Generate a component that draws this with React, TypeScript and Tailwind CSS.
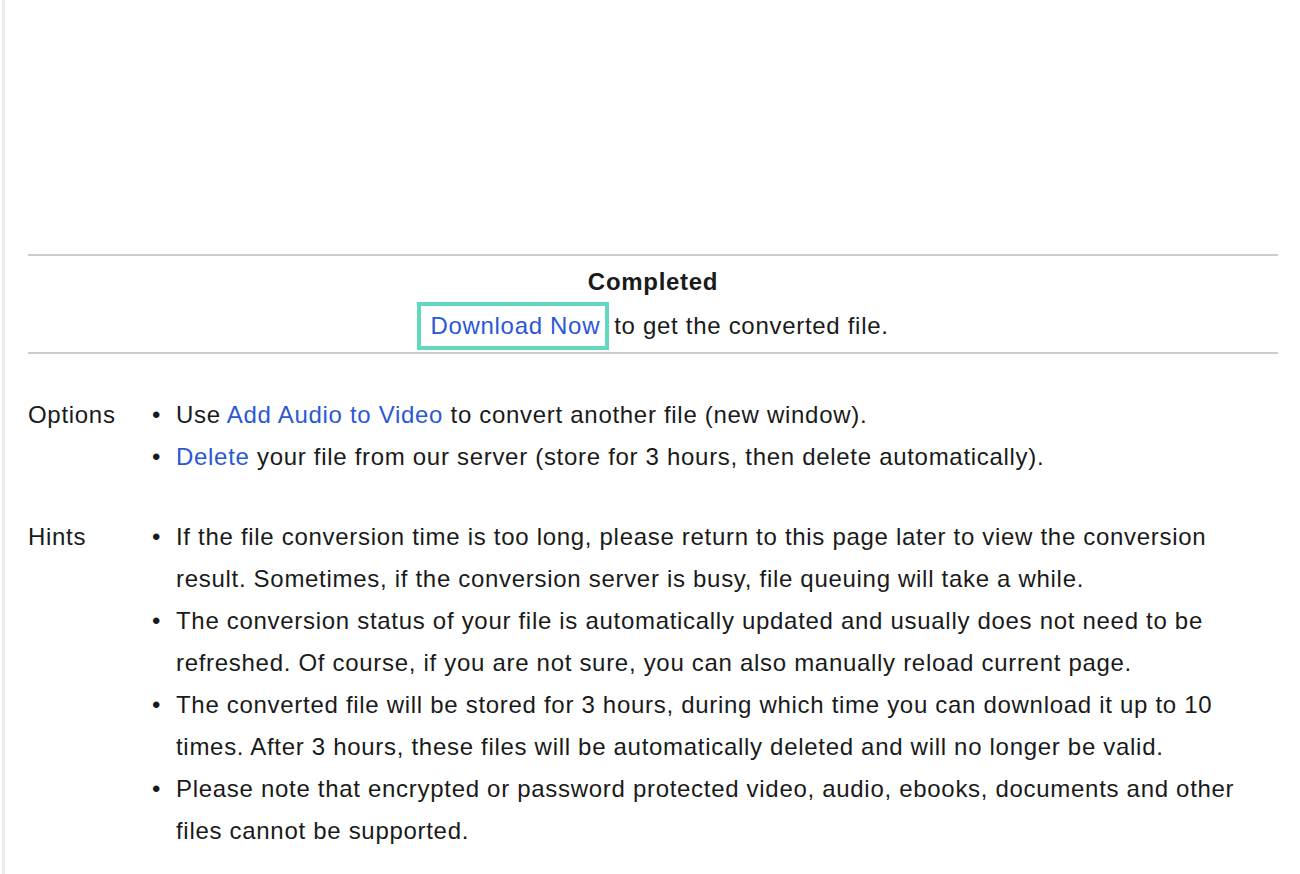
const font = { fontFamily: '"Liberation Sans", Arial, sans-serif' }

function Link({ children }: { children: React.ReactNode }) {
  return <a href="#" className="text-[#2a58d6] no-underline">{children}</a>
}

function Bullets({ items }: { items: React.ReactNode[] }) {
  return (
    <ul className="flex flex-col">
      {items.map((item, i) => (
        <li key={i} className="flex">
          <span className="w-[24px] shrink-0">•</span>
          <span className="flex-1">{item}</span>
        </li>
      ))}
    </ul>
  )
}

export default function App() {
  const options = [
    <>Use <Link>Add Audio to Video</Link> to convert another file (new window).</>,
    <><Link>Delete</Link> your file from our server (store for 3 hours, then delete automatically).</>,
  ]

  const hints = [
    "If the file conversion time is too long, please return to this page later to view the conversion result. Sometimes, if the conversion server is busy, file queuing will take a while.",
    "The conversion status of your file is automatically updated and usually does not need to be refreshed. Of course, if you are not sure, you can also manually reload current page.",
    "The converted file will be stored for 3 hours, during which time you can download it up to 10 times. After 3 hours, these files will be automatically deleted and will no longer be valid.",
    "Please note that encrypted or password protected video, audio, ebooks, documents and other files cannot be supported.",
  ]

  return (
    <div
      className="min-h-[874px] bg-white border-l-[3px] border-[#ebebeb] ml-[2px] text-[24px] leading-[42px] tracking-[0.7px] text-[#1a1a1a]"
      style={font}
    >
      <div className="pl-[23px] pr-[22px] pt-[254px]">
        <div className="border-t-2 border-b-2 border-[#cccccc] pt-[6px] pb-[2px] text-center">
          <div className="font-bold leading-[40px]">Completed</div>
          <div className="flex justify-center items-center">
            <span className="border-4 border-[#62d8c1] pl-[9px] pr-[5px] leading-[40px] mr-[5px]">
              <Link>Download Now</Link>
            </span>
            <span>to get the converted file.</span>
          </div>
        </div>

        <div className="pt-[40px] flex flex-col gap-[38px]">
          <div className="flex">
            <div className="w-[124px] shrink-0">Options</div>
            <div className="flex-1"><Bullets items={options} /></div>
          </div>
          <div className="flex">
            <div className="w-[124px] shrink-0">Hints</div>
            <div className="flex-1"><Bullets items={hints} /></div>
          </div>
        </div>
      </div>
    </div>
  )
}
